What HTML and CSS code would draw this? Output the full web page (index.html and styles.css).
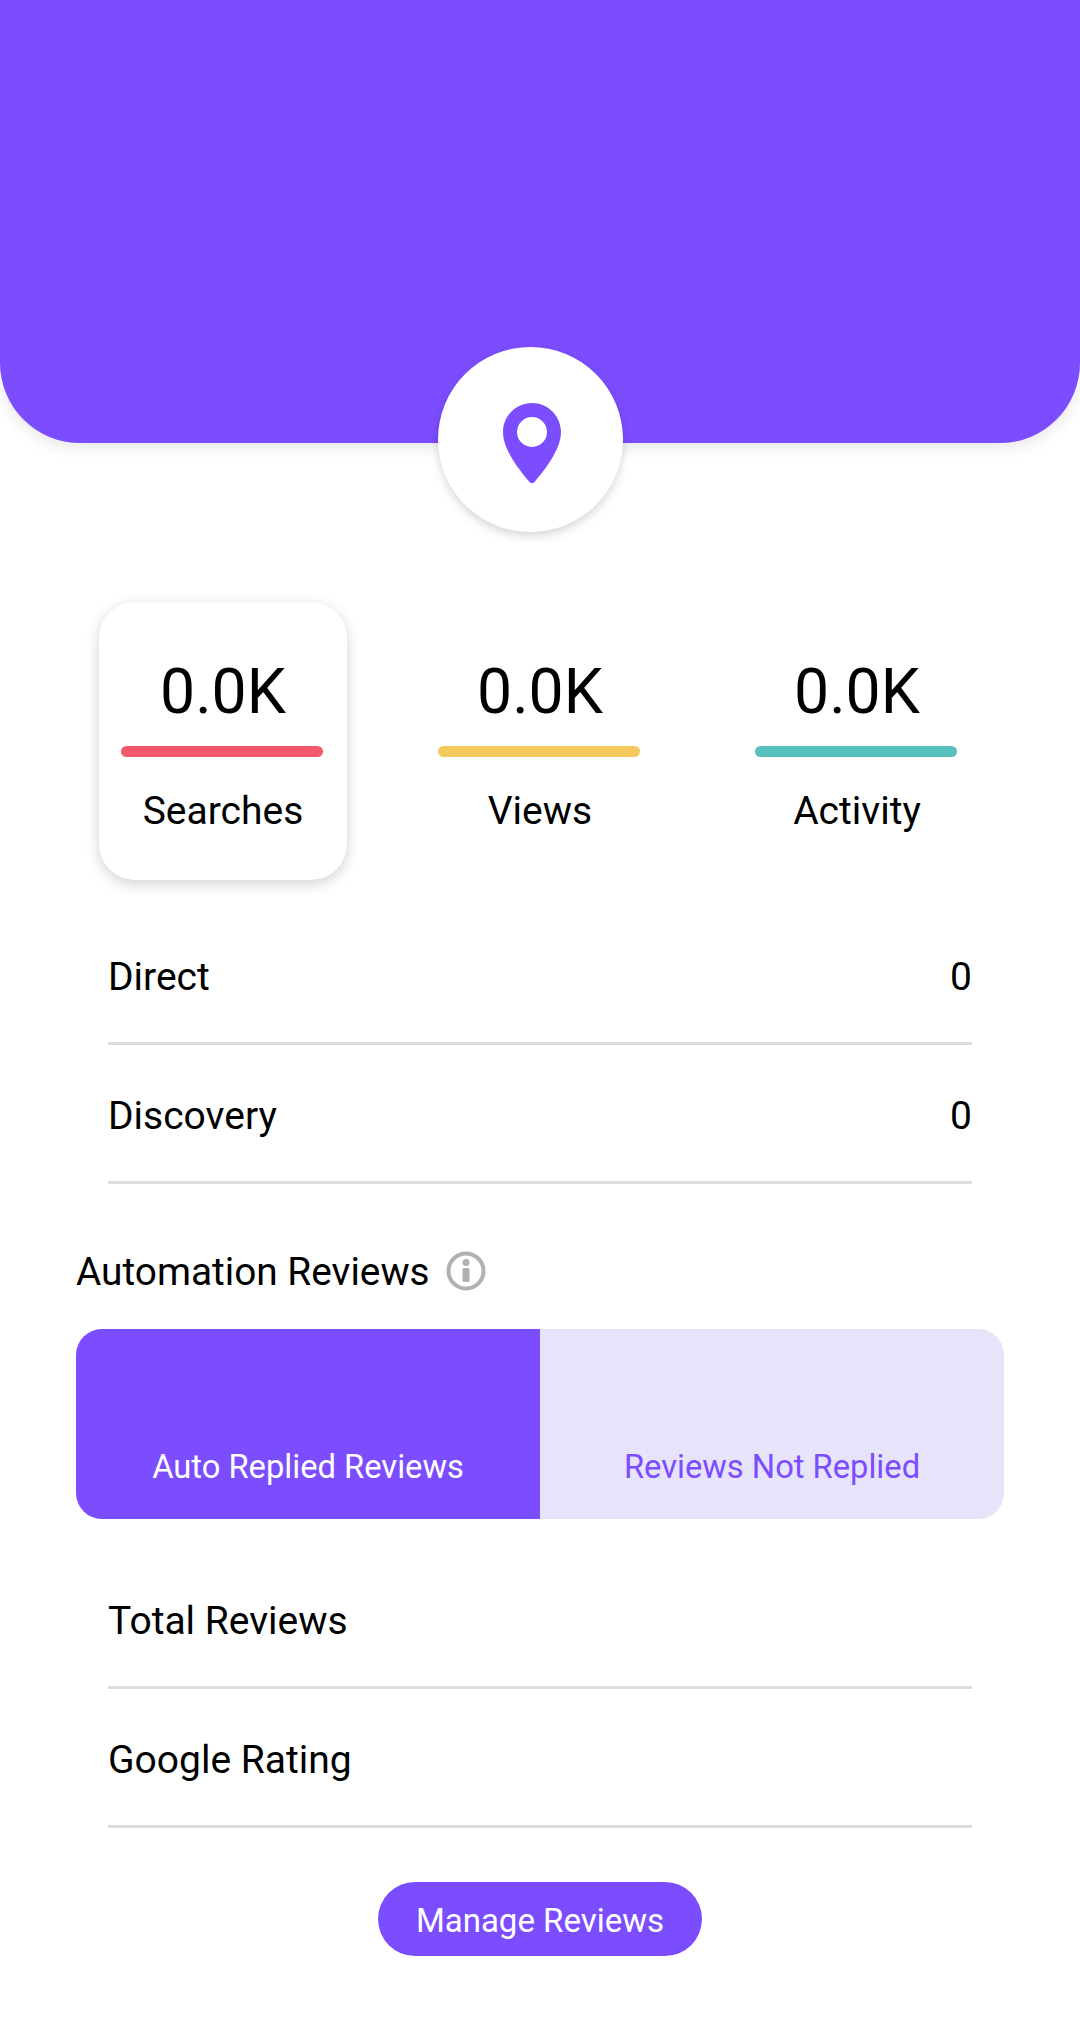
FILE: index.html
```html
<!DOCTYPE html>
<html lang="en">
<head>
    <meta charset="UTF-8">
    <title>Business Insights</title>
    <meta name="viewport" content="width=device-width, initial-scale=1.0">
    <link rel="stylesheet" href="styles.css">
</head>
<body>
    <div class="page">
        <div class="hero"></div>
        <div class="pin-badge">
            <svg class="pin-icon" viewBox="0 0 58 80">
                <path fill-rule="evenodd" d="M29 0C13 0 0 13 0 29c0 19 19 41 26.500 50a3.200 3.200 0 0 0 5 0C39 70 58 48 58 29 58 13 45 0 29 0zm0 14a15 15 0 1 1 0 30 15 15 0 0 1 0-30z"/>
            </svg>
        </div>

        <div class="stats">
            <div class="stat active">
                <div class="stat-value">0.0K</div>
                <div class="stat-bar red"></div>
                <div class="stat-label">Searches</div>
            </div>
            <div class="stat">
                <div class="stat-value">0.0K</div>
                <div class="stat-bar yellow"></div>
                <div class="stat-label">Views</div>
            </div>
            <div class="stat">
                <div class="stat-value">0.0K</div>
                <div class="stat-bar teal"></div>
                <div class="stat-label">Activity</div>
            </div>
        </div>

        <div class="rows">
            <div class="row"><span>Direct</span><span>0</span></div>
            <div class="row"><span>Discovery</span><span>0</span></div>
        </div>

        <div class="section-title">
            <span>Automation Reviews</span>
            <svg class="info-icon" viewBox="0 0 40 40">
                <circle cx="20" cy="20" r="17.500" fill="none" stroke-width="4"/>
                <circle class="info-mark" cx="20" cy="11.500" r="3.500"/>
                <rect class="info-mark" x="16.500" y="17" width="7" height="14" rx="1.500"/>
            </svg>
        </div>

        <div class="split">
            <div class="split-part on">Auto Replied Reviews</div>
            <div class="split-part off">Reviews Not Replied</div>
        </div>

        <div class="rows rows-reviews">
            <div class="row"><span>Total Reviews</span></div>
            <div class="row"><span>Google Rating</span></div>
        </div>

        <div class="actions">
            <button class="manage-btn">Manage Reviews</button>
        </div>
    </div>
</body>
</html>
```

FILE: styles.css
```css
* { box-sizing: border-box; }
body { font-family: Roboto, "Noto Sans", sans-serif; background: #fff; color: #000; margin: 0; }
.page { width: 1080px; height: 2020px; overflow: hidden; }

.hero { height: 443px; background: #7c4dff; border-radius: 0 0 80px 80px; box-shadow: 0 4px 16px rgba(0,0,0,0.1); }
.pin-badge { position: relative; width: 185px; height: 185px; margin: -96px 0 0 438px; background: #fff; border-radius: 50%; box-shadow: 0 4px 10px rgba(0,0,0,0.16); display: flex; justify-content: center; padding-top: 56px; }
.pin-icon { width: 58px; height: 80px; fill: #7c4dff; margin-left: 2px; }

.stats { display: flex; gap: 69px; margin: 70px 0 0 99px; }
.stat { width: 248px; height: 278px; border-radius: 36px; padding: 55px 23px 0; text-align: center; }
.stat.active { box-shadow: 0 4px 14px rgba(0,0,0,0.18); }
.stat-value { font-size: 62.500px; line-height: 70px; }
.stat-bar { height: 11px; border-radius: 6px; margin: 19px 1px 0 -1px; }
.stat-bar.red { background: #f25a6c; }
.stat-bar.yellow { background: #f5c95c; }
.stat-bar.teal { background: #56c1bd; }
.stat-label { font-size: 39px; line-height: 46px; margin-top: 31px; }

.rows { margin: 26px 108px 0; }
.rows-reviews { margin-top: 31px; }
.row { display: flex; justify-content: space-between; align-items: center; height: 139px; border-bottom: 3px solid #dcdcdc; font-size: 39px; padding-top: 5px; }

.section-title { display: flex; align-items: center; gap: 16px; margin: 65px 0 0 76px; font-size: 38.800px; line-height: 46px; }
.info-icon { width: 40px; height: 40px; stroke: #b0b0b0; margin-top: -3px; }
.info-mark { fill: #b0b0b0; stroke: none; }

.split { display: flex; height: 190px; margin: 34px 76px 0; border-radius: 26px; overflow: hidden; }
.split-part { flex: 1; display: flex; align-items: flex-end; justify-content: center; padding-bottom: 32px; font-size: 32.700px; line-height: 40px; }
.split-part.on { background: #7c4dff; color: #fff; }
.split-part.off { background: #e6e3fb; color: #7c4dff; }

.actions { display: flex; justify-content: center; margin-top: 54px; }
.manage-btn { width: 324px; height: 74px; border: none; border-radius: 37px; background: #7c4dff; color: #fff; font-family: inherit; font-size: 33px; padding-top: 3px; cursor: pointer; }
```
